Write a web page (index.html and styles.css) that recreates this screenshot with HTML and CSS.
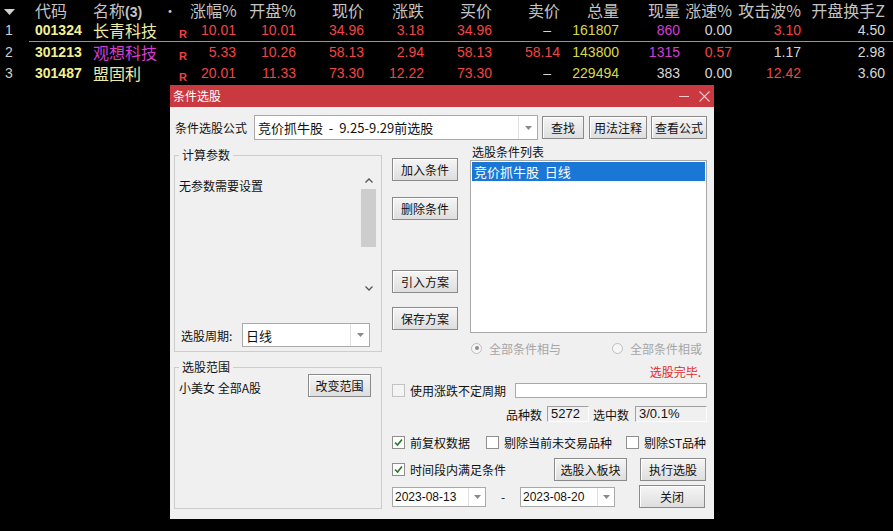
FILE: index.html
```html
<!DOCTYPE html>
<html lang="zh-CN">
<head>
<meta charset="utf-8">
<title>条件选股</title>
<link rel="stylesheet" href="styles.css">
</head>
<body>
<div class="quotes">
  <div class="qrow head">
    <div class="c0"><svg class="sort" width="11" height="6" viewBox="0 0 11 6"><polygon points="0,0 11,0 5.5,6" fill="#d0d0d0"/></svg></div>
    <div class="c1">代码</div>
    <div class="c2">名称<b class="cnt">(3)</b></div>
    <div class="c3 dot">•</div>
    <div class="num">涨幅%</div>
    <div class="num">开盘%</div>
    <div class="num">现价</div>
    <div class="num">涨跌</div>
    <div class="num">买价</div>
    <div class="num">卖价</div>
    <div class="num">总量</div>
    <div class="num">现量</div>
    <div class="num">涨速%</div>
    <div class="num">攻击波%</div>
    <div class="num">开盘换手Z</div>
  </div>
  <div class="qrow first">
    <div class="c0 idx">1</div>
    <div class="c1 code">001324</div>
    <div class="c2 name yel">长青科技</div>
    <div class="c3"><span class="r">R</span></div>
    <div class="num red">10.01</div>
    <div class="num red">10.01</div>
    <div class="num red">34.96</div>
    <div class="num red">3.18</div>
    <div class="num red">34.96</div>
    <div class="num gry dash">–</div>
    <div class="num vol">161807</div>
    <div class="num mag">860</div>
    <div class="num gry">0.00</div>
    <div class="num red">3.10</div>
    <div class="num gry">4.50</div>
  </div>
  <div class="qrow">
    <div class="c0 idx">2</div>
    <div class="c1 code">301213</div>
    <div class="c2 name mag">观想科技</div>
    <div class="c3"><span class="r">R</span></div>
    <div class="num red">5.33</div>
    <div class="num red">10.26</div>
    <div class="num red">58.13</div>
    <div class="num red">2.94</div>
    <div class="num red">58.13</div>
    <div class="num red">58.14</div>
    <div class="num vol">143800</div>
    <div class="num mag">1315</div>
    <div class="num red">0.57</div>
    <div class="num gry">1.17</div>
    <div class="num gry">2.98</div>
  </div>
  <div class="qrow">
    <div class="c0 idx">3</div>
    <div class="c1 code">301487</div>
    <div class="c2 name yel">盟固利</div>
    <div class="c3"><span class="r">R</span></div>
    <div class="num red">20.01</div>
    <div class="num red">11.33</div>
    <div class="num red">73.30</div>
    <div class="num red">12.22</div>
    <div class="num red">73.30</div>
    <div class="num gry dash">–</div>
    <div class="num vol">229494</div>
    <div class="num gry">383</div>
    <div class="num gry">0.00</div>
    <div class="num red">12.42</div>
    <div class="num gry">3.60</div>
  </div>
</div>

<div class="dialog">
  <div class="titlebar">
    <span class="title">条件选股</span>
    <span class="tb-btns">
      <svg width="10" height="10" viewBox="0 0 10 10"><line x1="0" y1="5.5" x2="10" y2="5.5" stroke="#f3c9cb" stroke-width="1"/></svg>
      <svg width="11" height="11" viewBox="0 0 11 11"><path d="M0.5 0.5 L10.5 10.5 M10.5 0.5 L0.5 10.5" stroke="#f3c9cb" stroke-width="1.1"/></svg>
    </span>
  </div>
  <div class="dbody">
    <div class="toprow">
      <span class="lbl-formula">条件选股公式</span>
      <div class="combo formula"><span class="ctext">竞价抓牛股  -  9.25-9.29前选股</span><span class="drop"><svg width="7" height="4" viewBox="0 0 7 4"><polygon points="0,0 7,0 3.5,4" fill="#8a8a8a"/></svg></span></div>
      <button class="btn b-find">查找</button>
      <button class="btn b-usage">用法注释</button>
      <button class="btn b-view">查看公式</button>
    </div>
    <div class="main">
      <div class="leftcol">
        <div class="group g1">
          <div class="gtitle">计算参数</div>
          <div class="params">
            <div class="ptext">无参数需要设置</div>
            <div class="vscroll">
              <span class="arrow"><svg width="8" height="5" viewBox="0 0 8 5"><path d="M0.5 4.5 L4 1 L7.5 4.5" stroke="#555" stroke-width="1.3" fill="none"/></svg></span>
              <span class="thumb"></span>
              <span class="track"></span>
              <span class="arrow"><svg width="8" height="5" viewBox="0 0 8 5"><path d="M0.5 0.5 L4 4 L7.5 0.5" stroke="#555" stroke-width="1.3" fill="none"/></svg></span>
            </div>
          </div>
          <div class="period">
            <span class="plabel">选股周期:</span>
            <div class="combo pcombo"><span class="ctext">日线</span><span class="drop"><svg width="7" height="4" viewBox="0 0 7 4"><polygon points="0,0 7,0 3.5,4" fill="#8a8a8a"/></svg></span></div>
          </div>
        </div>
        <div class="group g2">
          <div class="gtitle">选股范围</div>
          <div class="range">
            <span class="range-text">小美女 全部A股</span>
            <button class="btn b-range">改变范围</button>
          </div>
        </div>
      </div>
      <div class="rightcol">
        <div class="upper">
          <div class="btncol">
            <button class="btn b-add">加入条件</button>
            <button class="btn b-del">删除条件</button>
            <button class="btn b-imp">引入方案</button>
            <button class="btn b-save">保存方案</button>
          </div>
          <div class="listcol">
            <div class="ltitle">选股条件列表</div>
            <div class="listbox"><div class="litem">竞价抓牛股  日线</div></div>
          </div>
        </div>
        <div class="radios">
          <span class="ritem r1"><span class="radio on"></span>全部条件相与</span>
          <span class="ritem"><span class="radio"></span>全部条件相或</span>
        </div>
        <div class="status">选股完毕.</div>
        <div class="row-use">
          <span class="cb dis"></span>
          <span class="cbl">使用涨跌不定周期</span>
          <span class="input"></span>
        </div>
        <div class="row-count">
          <span>品种数</span>
          <span class="sbox s1">5272</span>
          <span class="lbl-sel">选中数</span>
          <span class="sbox s2">3/0.1%</span>
        </div>
        <div class="row-opts">
          <span class="opt o1"><span class="cb"><svg width="11" height="11" viewBox="0 0 11 11"><path d="M2 5.5 L4.5 8 L9 2.5" stroke="#23782a" stroke-width="1.6" fill="none"/></svg></span><span class="cbl">前复权数据</span></span>
          <span class="opt o2"><span class="cb"></span><span class="cbl">剔除当前未交易品种</span></span>
          <span class="opt o3"><span class="cb"></span><span class="cbl">剔除ST品种</span></span>
        </div>
        <div class="row-time">
          <span class="opt ot"><span class="cb"><svg width="11" height="11" viewBox="0 0 11 11"><path d="M2 5.5 L4.5 8 L9 2.5" stroke="#23782a" stroke-width="1.6" fill="none"/></svg></span><span class="cbl">时间段内满足条件</span></span>
          <button class="btn b-block">选股入板块</button>
          <button class="btn b-run">执行选股</button>
        </div>
        <div class="row-date">
          <div class="combo date d1"><span class="ctext">2023-08-13</span><span class="drop"><svg width="7" height="4" viewBox="0 0 7 4"><polygon points="0,0 7,0 3.5,4" fill="#8a8a8a"/></svg></span></div>
          <span class="dsep">-</span>
          <div class="combo date d2"><span class="ctext">2023-08-20</span><span class="drop"><svg width="7" height="4" viewBox="0 0 7 4"><polygon points="0,0 7,0 3.5,4" fill="#8a8a8a"/></svg></span></div>
          <button class="btn b-close">关闭</button>
        </div>
      </div>
    </div>
  </div>
</div>
</body>
</html>
```

FILE: styles.css
```css
* { box-sizing: border-box; }
html, body { margin: 0; padding: 0; }
body {
  background: #000;
  width: 893px;
  height: 531px;
  overflow: hidden;
  position: relative;
  font-family: "Noto Sans CJK SC", sans-serif;
}

/* ---------- quote table ---------- */
.quotes {
  font-family: "Liberation Sans", "Noto Sans CJK SC", sans-serif;
  font-size: 14px;
}
.qrow {
  display: grid;
  grid-template-columns: 35px 58px 67px 30px 46px 60px 68px 60px 68px 68px 59px 61px 52px 69px 84px;
  height: 21px;
  line-height: 21px;
  white-space: nowrap;
}
.head {
  height: 20px;
  line-height: 20px;
  color: #c4c4c4;
  font-family: "Noto Sans CJK SC", sans-serif;
  font-size: 16px;
}
.head .cnt { font-family: "Liberation Sans", sans-serif; font-size: 14px; font-weight: bold; }
.first {
  height: 22px;
  background: linear-gradient(#a89c4a, #a89c4a) no-repeat 29px 100% / calc(100% - 29px) 1px;
}
.c0 { padding-left: 4px; }
.sort { vertical-align: 2px; }
.idx { color: #cfcfcf; padding-left: 5px; }
.num { text-align: right; }
.code { color: #f2f291; font-weight: bold; }
.name { font-family: "Noto Sans CJK SC", sans-serif; font-size: 16px; }
.yel { color: #ececa8; }
.mag { color: #d63cd6; }
.red { color: #f24545; }
.gry { color: #d6d6d6; }
.vol { color: #d8d84c; }
.dash { padding-right: 9px; }
.c3 { padding-left: 19px; }
.c3.dot { padding-left: 3px; font-size: 14px; }
.r { color: #f04040; font-size: 11px; font-weight: bold; vertical-align: -3px; }

/* ---------- dialog ---------- */
.dialog {
  position: absolute;
  left: 170px;
  top: 85px;
  width: 544px;
  height: 434px;
  background: #f0f0f0;
  font-size: 12px;
  color: #111;
}
.titlebar {
  height: 22px;
  background: #c9393f;
  display: flex;
  align-items: center;
  justify-content: space-between;
  padding: 0 4px 0 3px;
  color: #fff;
}
.title { line-height: 22px; font-size: 12px; }
.tb-btns { display: flex; align-items: center; gap: 10px; }
.dbody { padding: 8px 7px 0 4px; }

.toprow { display: flex; align-items: center; height: 25px; }
.lbl-formula { width: 80px; padding-left: 1px; }

.combo {
  display: flex;
  background: #fff;
  border: 1px solid #a9a9a9;
}
.ctext { flex: 1; white-space: pre; display: flex; align-items: center; padding-left: 3px; }
.drop {
  width: 19px;
  border-left: 1px solid #e2e2e2;
  display: flex;
  align-items: center;
  justify-content: center;
}
.formula { width: 284px; height: 25px; font-size: 13px; }

.btn {
  font-family: "Noto Sans CJK SC", sans-serif;
  font-size: 12px;
  color: #111;
  height: 23px;
  padding: 0;
  line-height: 21px;
  border: 1px solid #8a8a8a;
  border-radius: 0;
  background: linear-gradient(#f5f5f5, #dedede);
  box-shadow: inset 1px 1px 0 #fff;
}
.b-find { margin-left: 4px; width: 42px; }
.b-usage { margin-left: 5px; width: 58px; }
.b-view { margin-left: 4px; width: 56px; }

.main { display: flex; }
.leftcol { width: 208px; }
.group { border: 1px solid #cdcdcd; }
.gtitle {
  width: fit-content;
  margin: -9px 0 0 4px;
  padding: 0 3px;
  background: #f0f0f0;
  height: 16px;
  line-height: 16px;
}
.g1 { margin-top: 15px; height: 197px; }
.params { display: flex; margin-top: 9px; height: 125px; }
.ptext { flex: 1; padding: 6px 0 0 4px; line-height: 16px; }
.vscroll {
  width: 15px;
  margin-right: 5px;
  display: flex;
  flex-direction: column;
}
.vscroll .arrow { height: 17px; display: flex; align-items: center; justify-content: center; }
.thumb { height: 58px; background: #cdcdcd; }
.track { flex: 1; }
.period { display: flex; align-items: center; margin-top: 26px; height: 24px; }
.plabel { width: 67px; padding-left: 6px; }
.pcombo { width: 128px; height: 24px; font-size: 13px; }

.g2 { margin-top: 15px; height: 142px; }
.range {
  display: flex;
  justify-content: space-between;
  align-items: flex-start;
  margin-top: -1px;
  padding: 0 10px 0 4px;
}
.range-text { line-height: 16px; padding-top: 6px; }
.b-range { width: 63px; }

.rightcol { margin-left: 10px; width: 315px; }
.upper { display: flex; height: 193px; }
.btncol { width: 66px; display: flex; flex-direction: column; padding-top: 18px; }
.btncol .btn { width: 66px; }
.b-del { margin-top: 16px; }
.b-imp { margin-top: 50px; }
.b-save { margin-top: 14px; }
.listcol { margin-left: 12px; width: 237px; }
.ltitle { height: 20px; line-height: 16px; padding: 4px 0 0 2px; }
.listbox { height: 173px; border: 1px solid #a8a8a8; background: #fff; padding: 1px; }
.litem {
  background: #1a77d6;
  color: #fff;
  height: 19px;
  line-height: 19px;
  font-size: 13px;
  padding-left: 2px;
  white-space: pre;
}

.radios { margin-top: 7px; height: 16px; display: flex; align-items: center; padding-left: 79px; color: #a6a6a6; }
.ritem { display: flex; align-items: center; }
.r1 { width: 141px; }
.radio {
  width: 11px;
  height: 11px;
  border: 1px solid #bdbdbd;
  border-radius: 50%;
  margin-right: 7px;
  display: flex;
  align-items: center;
  justify-content: center;
  background: #f6f6f6;
}
.radio.on::after { content: ""; width: 4px; height: 4px; border-radius: 50%; background: #8c8c8c; }

.status { margin-top: 8px; height: 16px; line-height: 16px; text-align: right; padding-right: 6px; color: #e02a2a; }

.cb {
  width: 13px;
  height: 13px;
  border: 1px solid #8f8f8f;
  background: #fff;
  display: flex;
  align-items: center;
  justify-content: center;
  flex: none;
}
.cb.dis { border-color: #c2c2c2; background: #f4f4f4; }
.cbl { margin-left: 5px; white-space: nowrap; }

.row-use { margin-top: 2px; height: 16px; display: flex; align-items: center; }
.input { margin-left: 9px; flex: 1; height: 15px; background: #fff; border: 1px solid #a9a9a9; }

.row-count { margin-top: 8px; height: 16px; display: flex; align-items: center; padding-left: 114px; }
.sbox {
  height: 16px;
  line-height: 14px;
  border: 1px solid;
  border-color: #a0a0a0 #fdfdfd #fdfdfd #a0a0a0;
  padding-left: 3px;
  font-family: "Liberation Sans", sans-serif;
  font-size: 13px;
}
.s1 { margin-left: 5px; width: 42px; }
.lbl-sel { margin-left: 4px; }
.s2 { margin-left: 6px; width: 72px; }

.opt { display: flex; align-items: center; }
.row-opts { margin-top: 12px; height: 16px; display: flex; align-items: center; }
.o1 { width: 94px; }
.o2 { width: 140px; }

.row-time { margin-top: 8px; height: 23px; display: flex; align-items: center; }
.ot { width: 162px; }
.b-block { width: 73px; }
.b-run { margin-left: 13px; width: 66px; }

.row-date { margin-top: 4px; height: 23px; display: flex; align-items: center; }
.date { height: 20px; font-family: "Liberation Sans", sans-serif; font-size: 12px; }
.date .ctext { padding-left: 2px; }
.date .drop { width: 17px; }
.d1 { width: 94px; }
.d2 { width: 95px; }
.dsep { width: 34px; padding-left: 15px; }
.b-close { margin-left: 24px; width: 66px; }
```
